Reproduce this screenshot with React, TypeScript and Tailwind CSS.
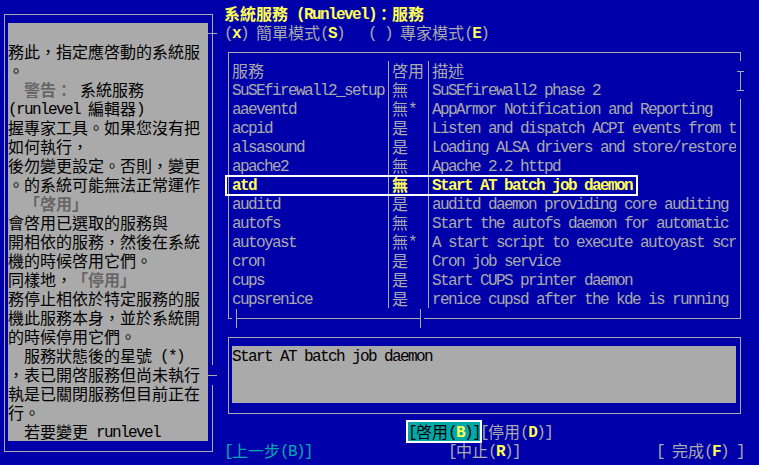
import { FC, ReactNode } from "react";
import clsx from "clsx";

// terminal cell: 8px wide, 19px tall. CJK glyphs take two cells.
const isWide = (ch: string) => (ch.codePointAt(0) ?? 0) >= 0x2e80;

const splitRuns = (text: string) => {
  const out: { wide: boolean; s: string }[] = [];
  for (const ch of text) {
    const wide = isWide(ch);
    const last = out[out.length - 1];
    if (last && last.wide === wide) last.s += ch;
    else out.push({ wide, s: ch });
  }
  return out;
};

const T: FC<{ children: string; className?: string }> = ({ children, className }) => (
  <>
    {splitRuns(children).map((r, i) =>
      r.wide ? (
        <span
          key={i}
          className={clsx(
            "block h-[19px] leading-[19px] whitespace-pre text-[16px] font-['Noto_Sans_CJK_TC','Noto_Sans_CJK_SC',sans-serif]",
            className
          )}
        >
          {r.s}
        </span>
      ) : (
        <span
          key={i}
          className={clsx(
            "block h-[19px] leading-[22px] whitespace-pre text-[16px] tracking-[-1.6px] font-['Liberation_Mono',monospace]",
            className
          )}
        >
          {r.s}
        </span>
      )
    )}
  </>
);

const Row: FC<{ children?: ReactNode; className?: string }> = ({ children, className }) => (
  <div className={clsx("flex h-[19px] shrink-0", className)}>{children}</div>
);

const Hot: FC<{ children: string }> = ({ children }) => (
  <T className="text-[#ffff55] font-bold">{children}</T>
);

const Dim: FC<{ children: string }> = ({ children }) => (
  <T className="text-[#666666] font-bold">{children}</T>
);

const help: ReactNode[] = [
  <T>{""}</T>,
  <T>務此，指定應啓動的系統服</T>,
  <T>。</T>,
  <>
    <T>{"  "}</T>
    <Dim>警告：</Dim>
    <T>{" 系統服務"}</T>
  </>,
  <T>(runlevel 編輯器)</T>,
  <T>握專家工具。如果您沒有把</T>,
  <T>如何執行，</T>,
  <T>後勿變更設定。否則，變更</T>,
  <T>。的系統可能無法正常運作</T>,
  <>
    <T>{"  "}</T>
    <Dim>「啓用」</Dim>
  </>,
  <T>會啓用已選取的服務與</T>,
  <T>開相依的服務，然後在系統</T>,
  <T>機的時候啓用它們。</T>,
  <>
    <T>同樣地，</T>
    <Dim>「停用」</Dim>
  </>,
  <T>務停止相依於特定服務的服</T>,
  <T>機此服務本身，並於系統開</T>,
  <T>的時候停用它們。</T>,
  <T>{"  服務狀態後的星號 (*)"}</T>,
  <T>，表已開啓服務但尚未執行</T>,
  <T>執是已關閉服務但目前正在</T>,
  <T>行。</T>,
  <T>{"  若要變更 runlevel"}</T>,
];

const services: [string, string, string][] = [
  ["SuSEfirewall2_setup", "無", "SuSEfirewall2 phase 2"],
  ["aaeventd", "無*", "AppArmor Notification and Reporting"],
  ["acpid", "是", "Listen and dispatch ACPI events from t"],
  ["alsasound", "是", "Loading ALSA drivers and store/restore"],
  ["apache2", "無", "Apache 2.2 httpd"],
  ["atd", "無", "Start AT batch job daemon"],
  ["auditd", "是", "auditd daemon providing core auditing"],
  ["autofs", "無", "Start the autofs daemon for automatic"],
  ["autoyast", "無*", "A start script to execute autoyast scr"],
  ["cron", "是", "Cron job service"],
  ["cups", "是", "Start CUPS printer daemon"],
  ["cupsrenice", "是", "renice cupsd after the kde is running"],
];

const selected = 5;

const Sep = () => (
  <div className="w-[8px] flex justify-center">
    <div className="w-px h-full bg-[#aaaaaa]" />
  </div>
);

const TableRow: FC<{ cells: [string, string, string]; active?: boolean }> = ({ cells, active }) => {
  const cls = active ? "text-[#ffff55] font-bold" : undefined;
  return (
    <Row>
      <div className="w-[152px] flex">
        <T className={cls}>{cells[0]}</T>
      </div>
      <Sep />
      <div className="w-[32px] flex">
        <T className={cls}>{cells[1]}</T>
      </div>
      <Sep />
      <div className="w-[304px] flex overflow-hidden">
        <T className={cls}>{cells[2]}</T>
      </div>
    </Row>
  );
};

const App = () => {
  return (
    <div className="w-[759px] h-[465px] overflow-hidden bg-[#0000aa] text-[#aaaaaa] pt-[4px]">
      <div className="grid grid-cols-[repeat(95,8px)] grid-rows-[repeat(24,19px)]">
        {/* help text panel */}
        <div className="col-start-1 col-span-27 row-start-1 row-span-24 flex items-start">
          <div className="ml-[4px] mt-[10px] w-[208px] h-[438px] border-l border-t border-b border-[#aaaaaa] pl-[3px] pt-[8px]">
            <div className="w-[200px] h-[418px] bg-[#aaaaaa] text-black overflow-hidden flex flex-col">
              {help.map((line, i) => (
                <Row key={i}>{line}</Row>
              ))}
            </div>
          </div>
          <div className="mt-[10px] w-px h-[438px] flex flex-col items-center">
            <div className="w-px h-[19px] shrink-0 bg-[#aaaaaa]" />
            <div className="w-[9px] h-px shrink-0 bg-[#aaaaaa]" />
            <div className="w-px h-[331px] shrink-0 bg-[#aaaaaa]" />
            <div className="h-[10px] shrink-0" />
            <div className="w-[9px] h-px shrink-0 bg-[#aaaaaa]" />
            <div className="h-[9px] shrink-0" />
            <div className="w-px h-[67px] shrink-0 bg-[#aaaaaa]" />
          </div>
        </div>

        {/* title */}
        <div className="col-start-29 col-span-40 row-start-1">
          <Row>
            <T className="text-[#ffff55] font-bold">系統服務 (Runlevel)：服務</T>
          </Row>
        </div>

        {/* mode radio */}
        <div className="col-start-29 col-span-40 row-start-2">
          <Row>
            <T>(</T>
            <Hot>x</Hot>
            <T>) 簡單模式(</T>
            <Hot>S</Hot>
            <T>{")   ( ) 專家模式("}</T>
            <Hot>E</Hot>
            <T>)</T>
          </Row>
        </div>

        {/* service table */}
        <div className="col-start-29 col-span-65 row-start-3 row-span-15 relative">
          <div className="ml-[4px] mt-[10px] flex items-start">
            <div className="w-[512px] h-[266px] border-l border-t border-[#aaaaaa] pl-[3px] pt-[8px] flex flex-col">
              <TableRow cells={["服務", "啓用", "描述"]} />
              {services.map((s, i) => (
                <TableRow key={s[0]} cells={s} active={i === selected} />
              ))}
            </div>
            <div className="w-px h-[267px] flex flex-col items-center">
              <div className="w-px h-[9px] shrink-0 bg-[#aaaaaa]" />
              <div className="h-[10px] shrink-0" />
              <div className="w-[7px] h-px shrink-0 bg-[#aaaaaa]" />
              <div className="w-px h-[18px] shrink-0 bg-[#aaaaaa]" />
              <div className="w-[7px] h-px shrink-0 bg-[#aaaaaa]" />
              <div className="h-[8px] shrink-0" />
              <div className="w-px flex-1 bg-[#aaaaaa]" />
            </div>
          </div>
          <div className="ml-[4px] -mt-[10px] h-[19px] flex items-center">
            <div className="w-[4px] h-px shrink-0 bg-[#aaaaaa]" />
            <div className="w-[4px] shrink-0" />
            <div className="w-px h-[19px] shrink-0 bg-[#aaaaaa]" />
            <div className="w-[183px] h-px shrink-0 bg-[#aaaaaa]" />
            <div className="w-px h-[19px] shrink-0 bg-[#aaaaaa]" />
            <div className="w-[3px] shrink-0" />
            <div className="w-[317px] h-px shrink-0 bg-[#aaaaaa]" />
          </div>
          <div className="absolute left-[1px] top-[133px] w-[413px] h-[21px] border-2 border-white" />
        </div>

        {/* description box */}
        <div className="col-start-29 col-span-65 row-start-18 row-span-5">
          <div className="ml-[4px] mt-[10px] w-[513px] h-[77px] border border-[#aaaaaa] pl-[3px] pt-[8px]">
            <div className="w-[504px] h-[57px] bg-[#aaaaaa] text-black">
              <Row>
                <T>Start AT batch job daemon</T>
              </Row>
            </div>
          </div>
        </div>

        {/* enable / disable */}
        <div className="col-start-52 col-span-18 row-start-23 flex">
          <div className="flex bg-[#00aaaa] text-black ring-2 ring-white">
            <T>[啓用(</T>
            <Hot>B</Hot>
            <T>)]</T>
          </div>
          <div className="flex">
            <T>[停用(</T>
            <Hot>D</Hot>
            <T>)]</T>
          </div>
        </div>

        {/* bottom buttons */}
        <div className="col-start-29 col-span-11 row-start-24 flex text-[#00aaaa]">
          <T>[上一步(B)]</T>
        </div>
        <div className="col-start-57 col-span-9 row-start-24 flex">
          <T>[中止(</T>
          <Hot>R</Hot>
          <T>)]</T>
        </div>
        <div className="col-start-83 col-span-11 row-start-24 flex">
          <T>[ 完成(</T>
          <Hot>F</Hot>
          <T>{") ]"}</T>
        </div>
      </div>
    </div>
  );
};

export default App;
